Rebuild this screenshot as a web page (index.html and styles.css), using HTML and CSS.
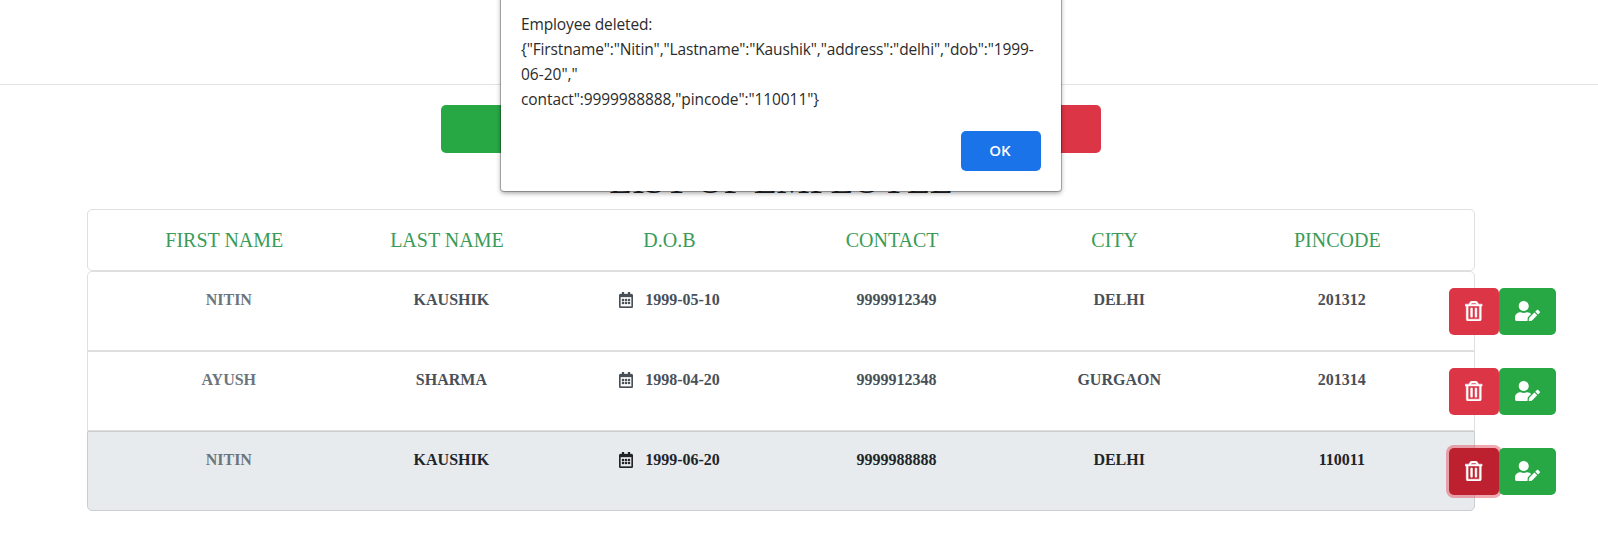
FILE: index.html
```html
<!DOCTYPE html>
<html lang="en">
<head>
<meta charset="utf-8">
<title>Employees</title>
<link rel="stylesheet" href="styles.css">
</head>
<body>
<svg class="sprite" aria-hidden="true">
  <symbol id="calendar" viewBox="0 0 448 512"><path d="M148 288h-40c-6.600 0-12-5.400-12-12v-40c0-6.600 5.400-12 12-12h40c6.600 0 12 5.400 12 12v40c0 6.600-5.400 12-12 12zm108-12v-40c0-6.600-5.400-12-12-12h-40c-6.600 0-12 5.400-12 12v40c0 6.600 5.400 12 12 12h40c6.600 0 12-5.400 12-12zm96 0v-40c0-6.600-5.400-12-12-12h-40c-6.600 0-12 5.400-12 12v40c0 6.600 5.400 12 12 12h40c6.600 0 12-5.400 12-12zm-96 96v-40c0-6.600-5.400-12-12-12h-40c-6.600 0-12 5.400-12 12v40c0 6.600 5.400 12 12 12h40c6.600 0 12-5.400 12-12zm-96 0v-40c0-6.600-5.400-12-12-12h-40c-6.600 0-12 5.400-12 12v40c0 6.600 5.400 12 12 12h40c6.600 0 12-5.400 12-12zm192 0v-40c0-6.600-5.400-12-12-12h-40c-6.600 0-12 5.400-12 12v40c0 6.600 5.400 12 12 12h40c6.600 0 12-5.400 12-12zm96-260v352c0 26.500-21.500 48-48 48H48c-26.500 0-48-21.500-48-48V112c0-26.500 21.500-48 48-48h48V12c0-6.600 5.400-12 12-12h40c6.600 0 12 5.400 12 12v52h128V12c0-6.600 5.400-12 12-12h40c6.600 0 12 5.400 12 12v52h48c26.500 0 48 21.500 48 48zm-48 346V160H48v298c0 3.300 2.700 6 6 6h340c3.300 0 6-2.700 6-6z"/></symbol>
  <symbol id="trash" viewBox="0 0 448 512"><path d="M268 416h24a12 12 0 0 0 12-12V188a12 12 0 0 0-12-12h-24a12 12 0 0 0-12 12v216a12 12 0 0 0 12 12zM432 80h-82.410l-34-56.700A48 48 0 0 0 274.410 0H173.590a48 48 0 0 0-41.160 23.300L98.410 80H16A16 16 0 0 0 0 96v16a16 16 0 0 0 16 16h16v336a48 48 0 0 0 48 48h288a48 48 0 0 0 48-48V128h16a16 16 0 0 0 16-16V96a16 16 0 0 0-16-16zM171.840 50.910A6 6 0 0 1 177 48h94a6 6 0 0 1 5.150 2.910L293.610 80H154.390zM368 464H80V128h288zm-212-48h24a12 12 0 0 0 12-12V188a12 12 0 0 0-12-12h-24a12 12 0 0 0-12 12v216a12 12 0 0 0 12 12z"/></symbol>
  <symbol id="user-edit" viewBox="0 0 640 512"><path d="M224 256c70.700 0 128-57.300 128-128S294.700 0 224 0 96 57.300 96 128s57.300 128 128 128zm89.600 32h-16.700c-22.200 10.200-46.900 16-72.900 16s-50.600-5.800-72.900-16h-16.700C60.200 288 0 348.200 0 422.400V464c0 26.500 21.500 48 48 48h274.900c-2.400-6.800-3.400-14-2.600-21.300l6.800-60.900 1.200-11.100 7.900-7.900 77.300-77.300c-24.500-27.700-60-45.500-99.900-45.500zm45.300 145.300l-6.800 61c-1.100 10.200 7.500 18.800 17.600 17.600l60.900-6.800 137.900-137.900-71.700-71.700-137.900 137.800zM633 268.900L595.100 231c-9.300-9.300-24.500-9.300-33.800 0l-37.800 37.800-4.100 4.100 71.800 71.700 41.800-41.800c9.300-9.400 9.300-24.500 0-33.900z"/></symbol>
</svg>
<header class="topbar"></header>
<main class="page">
  <div class="toolbar">
    <button class="btn btn-add" aria-label="Add"></button>
    <button class="btn btn-clear" aria-label="Clear"></button>
  </div>
  <h1 class="title">LIST OF EMPLOYEE</h1>
  <div class="list-head">
    <span>FIRST NAME</span><span>LAST NAME</span><span>D.O.B</span><span>CONTACT</span><span>CITY</span><span>PINCODE</span>
  </div>
  <ul class="list">
    <li class="item">
      <div class="cells"><span class="first">NITIN</span><span>KAUSHIK</span><span class="dob"><svg><use href="#calendar"/></svg>1999-05-10</span><span>9999912349</span><span>DELHI</span><span>201312</span></div>
      <div class="actions"><button class="btn btn-del" aria-label="Delete"><svg><use href="#trash"/></svg></button><button class="btn btn-edit" aria-label="Edit"><svg><use href="#user-edit"/></svg></button></div>
    </li>
    <li class="item">
      <div class="cells"><span class="first">AYUSH</span><span>SHARMA</span><span class="dob"><svg><use href="#calendar"/></svg>1998-04-20</span><span>9999912348</span><span>GURGAON</span><span>201314</span></div>
      <div class="actions"><button class="btn btn-del" aria-label="Delete"><svg><use href="#trash"/></svg></button><button class="btn btn-edit" aria-label="Edit"><svg><use href="#user-edit"/></svg></button></div>
    </li>
    <li class="item active">
      <div class="cells"><span class="first">NITIN</span><span>KAUSHIK</span><span class="dob"><svg><use href="#calendar"/></svg>1999-06-20</span><span>9999988888</span><span>DELHI</span><span>110011</span></div>
      <div class="actions"><button class="btn btn-del pressed" aria-label="Delete"><svg><use href="#trash"/></svg></button><button class="btn btn-edit" aria-label="Edit"><svg><use href="#user-edit"/></svg></button></div>
    </li>
  </ul>
</main>
<div class="dialog" role="alertdialog">
  <p class="message"><span class="l1">Employee deleted:</span><br><span class="l2">{"Firstname":"Nitin","Lastname":"Kaushik","address":"delhi","dob":"1999-</span><br><span class="l3">06-20","</span><br><span class="l4">contact":9999988888,"pincode":"110011"}</span></p>
  <button class="ok">OK</button>
</div>
</body>
</html>
```
FILE: styles.css
```css
* { box-sizing: border-box; }
body { margin: 0; height: 542px; overflow: hidden; background: #fff; color: #212529; font-family: "Liberation Serif", "Times New Roman", serif; }
.sprite { display: none; }
.topbar { height: 85px; border-bottom: 1px solid #e3e3e3; }
.page { width: 1388px; margin-left: 87px; padding-top: 20px; }
.btn { display: flex; align-items: center; justify-content: center; border: 0; padding: 0 0 2px; color: #fff; border-radius: 5px; }
.btn svg { height: 20px; fill: currentColor; }
.toolbar { display: flex; justify-content: space-between; width: 660px; margin-left: 354px; }
.btn-add, .btn-clear { width: 200px; height: 48px; }
.btn-add, .btn-edit { background: #28a745; }
.btn-clear, .btn-del { background: #dc3545; }
.title { margin: 4px 0; height: 48px; line-height: 48px; font-size: 37.300px; font-weight: 400; text-align: center; }
.list-head { display: grid; grid-template-columns: repeat(6, 222.600px); height: 62px; padding-left: 25px; border: 1px solid #dfdfdf; border-radius: 5px; line-height: 61px; font-size: 20px; color: #3a9b56; text-align: center; }
.list { list-style: none; margin: 0; padding: 0; }
.item { display: flex; height: 80px; border: 1px solid #dfdfdf; color: #495057; }
.item:first-child { border-radius: 5px 5px 0 0; }
.item:last-child { border-radius: 0 0 5px 5px; }
.item.active { background: #e8ebee; border-color: #caced1; color: #212529; }
.cells { display: grid; flex: none; grid-template-columns: repeat(6, 222.600px); width: 1335.600px; margin-left: 29.500px; padding-top: 16px; line-height: 24px; font-size: 16px; font-weight: 700; text-align: center; }
.first { color: #6c757d; }
.dob { display: flex; justify-content: center; align-items: center; height: 24px; padding-right: 9px; }
.dob svg { width: 14px; height: 16px; margin: 0 12px 1px 0; fill: currentColor; stroke: currentColor; stroke-width: 10px; }
.actions { display: flex; flex: none; margin: 16px 0 0 -4px; }
.btn-del, .btn-edit { height: 47px; }
.btn-del { width: 50px; }
.btn-del svg { width: 17.500px; stroke: currentColor; stroke-width: 12px; overflow: visible; }
.btn-edit { position: relative; width: 57px; }
.btn-edit svg { width: 25px; }
.pressed { background: #bd2130; box-shadow: 0 0 0 3px rgba(225, 83, 97, .5); }
.dialog { position: absolute; left: 501px; top: -10px; width: 560px; height: 201px; padding: 22px 20px; display: flex; flex-direction: column; justify-content: space-between; background: #fff; border-radius: 3px; box-shadow: 0 0 0 1px rgba(0, 0, 0, .24), 0 2px 5px rgba(0, 0, 0, .4); }
.message { margin: 0; font-family: "Open Sans", "Noto Sans", sans-serif; font-size: 15.500px; line-height: 25px; color: #2b2b2b; white-space: nowrap; }
.l1 { letter-spacing: -.13px; }
.l2 { letter-spacing: -.14px; }
.l4 { letter-spacing: -.1px; }
.ok { align-self: flex-end; width: 80px; height: 40px; margin-bottom: -2px; padding: 0 2px 2px 0; border: 0; border-radius: 5px; background: #1a73e8; color: #fff; font: 600 15px "Open Sans", sans-serif; }
```
